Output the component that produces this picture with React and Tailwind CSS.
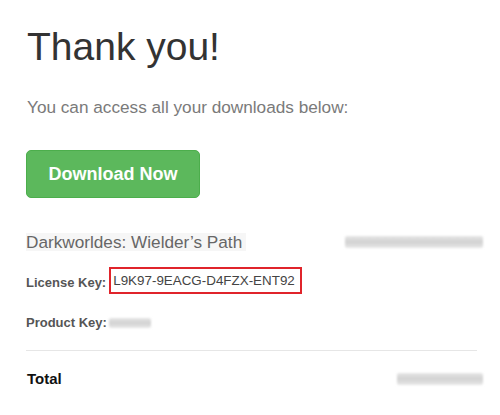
const Smudge = ({ className }) => (
  <div
    className={`rounded-[2px] bg-gradient-to-b from-[#e6e6e6] via-[#d2d2d2] to-[#e8e8e8] blur-[1px] ${className}`}
  />
)

const App = () => {
  return (
    <div
      className="w-[500px] h-[415px] bg-white pt-[27px] pl-[26px] pr-[17px] overflow-hidden"
      style={{ fontFamily: '"Liberation Sans", Arial, sans-serif' }}
    >
      {/* Heading */}
      <h1 className="text-[39px] leading-[39px] text-[#333333] pl-[1px]">Thank you!</h1>
      <p className="mt-[33px] text-[17.2px] leading-[17px] text-[#7a7a7a] pl-[1px]">
        You can access all your downloads below:
      </p>

      {/* Download button */}
      <button className="mt-[34px] w-[174px] h-[48px] flex items-center justify-center rounded-[5px] border border-[#4cae4c] bg-[#5cb85c] text-white text-[18px] font-bold">
        Download Now
      </button>

      {/* Product line */}
      <div className="mt-[35px] flex items-center justify-between">
        <span className="text-[17.2px] leading-[18px] text-[#666666] bg-[#f6f6f6] pr-[4px]">
          Darkworldes: Wielder’s Path
        </span>
        <Smudge className="w-[138px] h-[12px]" />
      </div>

      {/* License key */}
      <div className="mt-[16px] flex items-center">
        <span className="text-[13px] leading-[13px] font-bold text-[#555555] mt-[4px]">License Key:</span>
        <span className="ml-[3px] h-[27px] w-[193px] flex items-center pl-[2px] border-2 border-[#e0242b] text-[13.4px] leading-[13px] text-[#444444]">
          L9K97-9EACG-D4FZX-ENT92
        </span>
      </div>

      {/* Product key */}
      <div className="mt-[22px] flex items-center">
        <span className="text-[13px] leading-[13px] font-bold text-[#555555]">Product Key:</span>
        <Smudge className="ml-[2px] w-[42px] h-[10px]" />
      </div>

      <div className="mt-[21px] mr-[6px] border-t border-[#e6e6e6]" />

      {/* Total */}
      <div className="mt-[20px] flex items-center justify-between">
        <span className="text-[15px] leading-[15px] font-bold text-[#111111] pl-[1px]">Total</span>
        <Smudge className="w-[86px] h-[12px]" />
      </div>
    </div>
  )
}

export default App
